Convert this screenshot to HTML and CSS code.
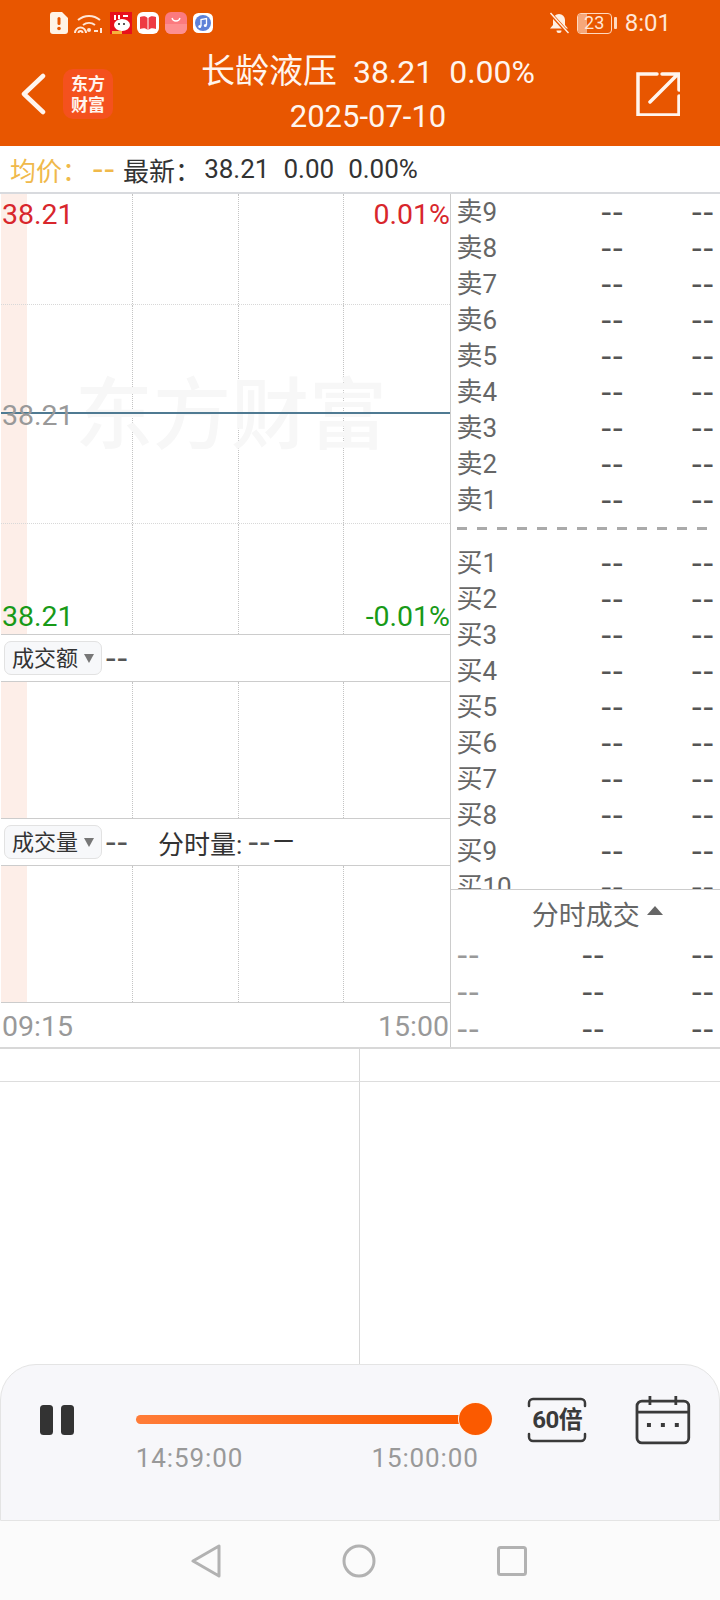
FILE: index.html
```html
<!DOCTYPE html>
<html>
    <head>
        <meta charset="utf-8">
        <title>长龄液压</title>
        <link rel="stylesheet" href="styles.css">
    </head>
    <body>
        <div class="page">
            <div class="top">
                <div class="status">
                    <div class="status-left">
                        <svg width="18" height="22" viewBox="0 0 18 22"><path d="M3 0h9l6 6v13a3 3 0 0 1-3 3H3a3 3 0 0 1-3-3V3a3 3 0 0 1 3-3z" fill="#fff3e6"/><rect x="7.500" y="5" width="3" height="8" rx="1.500" fill="#e85600"/><circle cx="9" cy="16.500" r="1.800" fill="#e85600"/></svg>
                        <svg width="30" height="22" viewBox="0 0 30 22" fill="none" stroke="#ffe6d6" stroke-width="2"><path d="M4 8a17 17 0 0 1 22 0"/><path d="M9 13a10 10 0 0 1 12 0"/><path d="M1 21a5.500 5.500 0 0 1 11 0"/><path d="M4.500 21a2 2 0 0 1 4 0"/><circle cx="15" cy="18" r="2" fill="#ffe6d6" stroke="none"/><path d="M20 19h4M27 16v5"/></svg>
                        <svg width="22" height="22" viewBox="0 0 22 22"><rect width="22" height="22" fill="#e8101c"/><ellipse cx="12" cy="13" rx="8" ry="6" fill="#fff"/><circle cx="9" cy="12" r="1" fill="#222"/><circle cx="14" cy="12" r="1" fill="#222"/><path d="M4 3h2v5H4zM8 3h2v4H8zM13 3h5v2h-5z" fill="#fff"/><rect x="2" y="19" width="10" height="3" fill="#f6b23c"/></svg>
                        <svg width="22" height="22" viewBox="0 0 22 22"><rect width="22" height="22" rx="6" fill="#fff"/><path d="M3 5c3-1 6-1 7.500 1v12C9 16 6 16 3 17zM19 5c-3-1-6-1-7.500 1v12c1.500-2 4.500-2 7.500-1z" fill="#ee3b43"/></svg>
                        <svg width="22" height="22" viewBox="0 0 22 22"><rect width="22" height="22" rx="6" fill="#fb7a7e"/><path d="M0 12h22v4a6 6 0 0 1-6 6H6a6 6 0 0 1-6-6z" fill="#fd8f90"/><path d="M7 6c1 4 7 4 8 0" fill="none" stroke="#fff" stroke-width="1.300"/></svg>
                        <svg width="20" height="20" viewBox="0 0 20 20"><rect width="20" height="20" rx="5.500" fill="#fff"/><circle cx="10" cy="10" r="8" fill="#5f82d8"/><path d="M8 13V6.500l5.500-1V12" fill="none" stroke="#fff" stroke-width="1.300"/><circle cx="6.800" cy="13.500" r="1.500" fill="#fff"/><circle cx="12.300" cy="12.500" r="1.500" fill="#fff"/></svg>
                    </div>
                    <div class="status-right">
                        <svg width="20" height="22" viewBox="0 0 20 22"><path d="M10 2a6 6 0 0 1 6 6v5l3 3.500H1L4 13V8a6 6 0 0 1 6-6z" fill="#fff0e4"/><path d="M7.500 18.500a2.500 2.500 0 0 0 5 0z" fill="#fff0e4"/><path d="M1 1l18 20" stroke="#e85600" stroke-width="3.500"/><path d="M1.500 1l18 20" stroke="#fff0e4" stroke-width="1.500"/></svg>
                        <div class="battery"><div class="battery-body"><span class="battery-fill"></span><span class="battery-num">23</span></div><span class="battery-cap"></span></div>
                        <span class="clock">8:01</span>
                    </div>
                </div>
                <div class="header">
                    <svg class="back" width="26" height="42" viewBox="0 0 26 42" fill="none" stroke="#fff5ee" stroke-width="4.500" stroke-linecap="round" stroke-linejoin="round"><path d="M23 3L4 21l19 18"/></svg>
                    <div class="logo">东方<br>财富</div>
                    <div class="title">
                        <div class="title-main"><span class="title-name">长龄液压</span>&nbsp; 38.21&nbsp; 0.00%</div>
                        <div class="title-date">2025-07-10</div>
                    </div>
                    <svg class="share" width="44" height="44" viewBox="0 0 44 44" fill="none" stroke="#fff5ee" stroke-width="3.500" stroke-linecap="round"><path d="M21 2H2v41h41V24"/><path d="M14 30L42 2M26 2h17v16"/></svg>
                </div>
            </div>

            <div class="quote">
                <span class="avg">均价：</span><span class="avg dash">--</span>
                <span class="quote-new">最新：</span><span class="quote-first">38.21</span><span class="quote-num">0.00</span><span class="quote-num">0.00%</span>
            </div>

            <div class="main">
                <div class="left">
                    <div class="pane pane-price">
                        <div class="grid-row row-a"><i></i><i></i><i></i><i></i></div>
                        <div class="grid-row row-b"><i></i><i></i><i></i><i></i></div>
                        <div class="grid-row row-c"><i></i><i></i><i></i><i></i></div>
                        <div class="grid-row row-d"><i></i><i></i><i></i><i></i></div>
                        <div class="watermark">东方财富</div>
                        <div class="mid-line"></div>
                        <span class="tag tag-high red">38.21</span>
                        <span class="tag tag-high tag-r red">0.01%</span>
                        <span class="tag tag-mid grey">38.21</span>
                        <span class="tag tag-low green">38.21</span>
                        <span class="tag tag-low tag-r green">-0.01%</span>
                    </div>
                    <div class="bar">
                        <div class="chip">成交额<span class="chip-arrow"></span></div>
                        <span class="dash">--</span>
                    </div>
                    <div class="pane pane-sub"><div class="grid-row row-full"><i></i><i></i><i></i><i></i></div></div>
                    <div class="bar">
                        <div class="chip">成交量<span class="chip-arrow"></span></div>
                        <span class="dash">--</span>
                        <span class="bar-extra">分时量:<span class="dash">--</span><span class="long-dash">—</span></span>
                    </div>
                    <div class="pane pane-sub"><div class="grid-row row-full"><i></i><i></i><i></i><i></i></div></div>
                    <div class="axis"><span>09:15</span><span>15:00</span></div>
                </div>

                <div class="right">
                    <div class="book">
                        <div class="row"><span class="row-name">卖9</span><span class="dash">--</span><span class="dash">--</span></div>
                        <div class="row"><span class="row-name">卖8</span><span class="dash">--</span><span class="dash">--</span></div>
                        <div class="row"><span class="row-name">卖7</span><span class="dash">--</span><span class="dash">--</span></div>
                        <div class="row"><span class="row-name">卖6</span><span class="dash">--</span><span class="dash">--</span></div>
                        <div class="row"><span class="row-name">卖5</span><span class="dash">--</span><span class="dash">--</span></div>
                        <div class="row"><span class="row-name">卖4</span><span class="dash">--</span><span class="dash">--</span></div>
                        <div class="row"><span class="row-name">卖3</span><span class="dash">--</span><span class="dash">--</span></div>
                        <div class="row"><span class="row-name">卖2</span><span class="dash">--</span><span class="dash">--</span></div>
                        <div class="row"><span class="row-name">卖1</span><span class="dash">--</span><span class="dash">--</span></div>
                        <div class="book-sep"></div>
                        <div class="row"><span class="row-name">买1</span><span class="dash">--</span><span class="dash">--</span></div>
                        <div class="row"><span class="row-name">买2</span><span class="dash">--</span><span class="dash">--</span></div>
                        <div class="row"><span class="row-name">买3</span><span class="dash">--</span><span class="dash">--</span></div>
                        <div class="row"><span class="row-name">买4</span><span class="dash">--</span><span class="dash">--</span></div>
                        <div class="row"><span class="row-name">买5</span><span class="dash">--</span><span class="dash">--</span></div>
                        <div class="row"><span class="row-name">买6</span><span class="dash">--</span><span class="dash">--</span></div>
                        <div class="row"><span class="row-name">买7</span><span class="dash">--</span><span class="dash">--</span></div>
                        <div class="row"><span class="row-name">买8</span><span class="dash">--</span><span class="dash">--</span></div>
                        <div class="row"><span class="row-name">买9</span><span class="dash">--</span><span class="dash">--</span></div>
                        <div class="row"><span class="row-name">买10</span><span class="dash">--</span><span class="dash">--</span></div>
                    </div>
                    <div class="trades">
                        <div class="trades-title">分时成交<span class="trades-arrow"></span></div>
                        <div class="trade"><span class="dash light">--</span><span class="dash">--</span><span class="dash">--</span></div>
                        <div class="trade"><span class="dash light">--</span><span class="dash">--</span><span class="dash">--</span></div>
                        <div class="trade"><span class="dash light">--</span><span class="dash">--</span><span class="dash">--</span></div>
                    </div>
                </div>
            </div>

            <div class="lower">
                <div class="lower-head"><div class="lower-cell"></div><div class="lower-cell"></div></div>
                <div class="lower-body"><div class="lower-cell"></div><div class="lower-cell"></div></div>
            </div>

            <div class="player">
                <div class="pause"><span></span><span></span></div>
                <div class="timeline">
                    <div class="track"><div class="track-fill"></div><div class="knob"></div></div>
                    <div class="times"><span>14:59:00</span><span>15:00:00</span></div>
                </div>
                <div class="speed">
                    <svg class="speed-frame" width="60" height="46" viewBox="0 0 60 46" fill="none" stroke="#3a3a3a" stroke-width="2.500" stroke-linecap="round"><path d="M2 9V6a4 4 0 0 1 4-4h48a4 4 0 0 1 4 4v3M2 37v3a4 4 0 0 0 4 4h48a4 4 0 0 0 4-4v-3"/></svg>
                    <span class="speed-text">60倍</span>
                </div>
                <svg class="calendar" width="56" height="50" viewBox="0 0 56 50" fill="none" stroke="#3a3a3a" stroke-width="2.800"><rect x="2" y="6" width="52" height="42" rx="5"/><path d="M2 17h52M15 1v9M41 1v9"/><path d="M12 30h4M26 30h4M40 30h4" stroke-width="4"/></svg>
            </div>

            <div class="nav">
                <svg width="30" height="34" viewBox="0 0 30 34" fill="none" stroke="#b2b2b2" stroke-width="3" stroke-linejoin="round"><path d="M28 2v30L2 17z"/></svg>
                <svg width="34" height="34" viewBox="0 0 34 34" fill="none" stroke="#b2b2b2" stroke-width="3"><circle cx="17" cy="17" r="15"/></svg>
                <svg width="30" height="30" viewBox="0 0 30 30" fill="none" stroke="#b2b2b2" stroke-width="3" stroke-linejoin="round"><rect x="1.500" y="1.500" width="27" height="27" rx="2"/></svg>
            </div>
        </div>
    </body>
</html>
```

FILE: styles.css
```css
* {
    box-sizing: border-box;
}

body {
    margin: 0;
    background-color: #fff;
    font-family: Roboto, "Noto Sans CJK SC", sans-serif;
    color: #333;
}

.page {
    width: 720px;
    height: 1600px;
    display: flex;
    flex-direction: column;
    overflow: hidden;
}

/* top orange part */
.top {
    height: 146px;
    background-color: #e85600;
    color: #fff5ee;
}

.status {
    height: 46px;
    padding: 0 49px 0 50px;
    display: flex;
    justify-content: space-between;
    align-items: center;
}

.status-left {
    display: flex;
    align-items: center;
    gap: 5.8px;
}

.status-right {
    display: flex;
    align-items: center;
    gap: 8px;
}

.battery {
    display: flex;
    align-items: center;
    gap: 2px;
}

.battery-body {
    position: relative;
    width: 35px;
    height: 21px;
    border: 1.5px solid #ffd9bf;
    border-radius: 4px;
    overflow: hidden;
}

.battery-fill {
    position: absolute;
    left: 0;
    top: 0;
    bottom: 0;
    width: 9px;
    background-color: #f6a77a;
}

.battery-num {
    position: absolute;
    left: 0;
    right: 0;
    top: 0;
    text-align: center;
    font-size: 18px;
    line-height: 18px;
    color: #ffe6d6;
}

.battery-cap {
    width: 3px;
    height: 12px;
    border-radius: 1px;
    background-color: #ffd9bf;
}

.clock {
    font-size: 24px;
    color: #ffe6d6;
}

.header {
    height: 100px;
    padding-bottom: 4px;
    display: flex;
    align-items: center;
}

.back {
    margin-left: 20px;
}

.logo {
    width: 50px;
    height: 50px;
    margin-left: 17px;
    border-radius: 10px;
    background-color: #f4511e;
    font-size: 17px;
    line-height: 21px;
    font-weight: 700;
    text-align: center;
    padding-top: 5px;
}

.title {
    width: 510px;
    margin-top: -5px;
    text-align: center;
}

.title-main {
    font-size: 32px;
    line-height: 50px;
    white-space: nowrap;
}

.title-name {
    font-size: 34px;
}

.title-date {
    font-size: 31px;
    line-height: 40px;
}

.share {
    margin-left: 13px;
}

/* 均价 line */
.quote {
    height: 46px;
    padding-left: 10px;
    display: flex;
    align-items: center;
    font-size: 26px;
    white-space: nowrap;
    color: #333;
}

.avg {
    color: #f0b94b;
}

.avg.dash {
    margin-left: 4px;
    color: #f0b94b;
}

.quote-new {
    margin-left: 8px;
}

.quote-first {
    margin-left: 3px;
}

.quote-num {
    margin-left: 14px;
}

.dash {
    font-family: "DejaVu Sans", sans-serif;
    font-size: 32px;
    line-height: 32px;
    color: #555;
}

.dash.light {
    color: #999;
}

/* charts + order book */
.main {
    height: 857px;
    display: flex;
    border-top: 2px solid #d8dade;
    border-bottom: 2px solid #d8d8d8;
}

.left {
    width: 450px;
    padding-left: 1px;
    display: flex;
    flex-direction: column;
}

.pane {
    position: relative;
    background: linear-gradient(#fdeee8, #fdeee8) 0 0 / 26px 100% no-repeat;
}

.pane-price {
    height: 440px;
    overflow: hidden;
}

.pane-sub {
    height: 136px;
}

.grid-row {
    display: grid;
    grid-template-columns: 132px 106px 105px 1fr;
    border-bottom: 1px dotted #d8d8d8;
}

.grid-row i {
    border-right: 1px dotted #c4c4c4;
}

.grid-row i:last-child {
    border-right: 0;
}

.row-a {
    height: 111px;
}

.row-b {
    height: 109px;
}

.row-c {
    height: 110px;
}

.row-d {
    height: 110px;
    border-bottom: 0;
}

.row-full {
    height: 100%;
    border-bottom: 0;
}

.watermark {
    position: absolute;
    left: 74px;
    top: 181px;
    font-size: 78px;
    line-height: 84px;
    font-weight: 500;
    color: #f7f7f7;
    white-space: nowrap;
}

.mid-line {
    position: absolute;
    left: 0;
    right: 0;
    top: 218px;
    height: 2px;
    background-color: #4f7a92;
}

.tag {
    position: absolute;
    left: 1px;
    font-size: 28.5px;
    line-height: 32px;
}

.tag-r {
    left: auto;
    right: 0;
}

.tag-high {
    top: 5px;
}

.tag-mid {
    top: 206px;
}

.tag-low {
    top: 407px;
}

.red {
    color: #d8262c;
}

.green {
    color: #189a18;
}

.grey {
    color: #999;
}

.bar {
    height: 48px;
    border-top: 1.5px solid #ccc;
    border-bottom: 1.5px solid #ccc;
    display: flex;
    align-items: center;
    gap: 3px;
    padding-left: 3px;
}

.chip {
    width: 98px;
    height: 34px;
    padding-left: 7px;
    border: 1px solid #e2e2e2;
    border-radius: 7px;
    background-color: #f7f8fa;
    font-size: 22px;
    line-height: 31px;
    display: flex;
    align-items: center;
    gap: 6px;
}

.chip-arrow {
    width: 0;
    height: 0;
    border-left: 5.5px solid transparent;
    border-right: 5.5px solid transparent;
    border-top: 9px solid #777;
}

.bar-extra {
    margin-left: 27px;
    font-size: 26px;
    display: flex;
    align-items: center;
}

.bar-extra .dash {
    margin-left: 5px;
}

.long-dash {
    margin-left: 2px;
    font-size: 28px;
    line-height: 32px;
}

.axis {
    flex: 1;
    padding: 2px 1px 0;
    border-top: 1.5px solid #ccc;
    display: flex;
    justify-content: space-between;
    align-items: center;
    font-size: 28.5px;
    color: #999;
}

.right {
    width: 270px;
    border-left: 1.5px solid #ccc;
    display: flex;
    flex-direction: column;
}

.book {
    height: 701px;
    overflow: hidden;
    padding: 0 6px 0 5.5px;
    border-bottom: 1.5px solid #ccc;
}

.row {
    height: 35.95px;
    display: grid;
    grid-template-columns: 144px 1fr 30px;
    align-items: center;
    font-size: 26px;
    line-height: 36px;
    color: #666;
}

.row .dash:last-child,
.trade .dash:last-child {
    text-align: right;
}

.row-name {
    white-space: nowrap;
}

.book-sep {
    height: 3px;
    margin: 10px 0 15px;
    background: repeating-linear-gradient(to right, #aaa 0, #aaa 10px, transparent 10px, transparent 20px);
}

.trades {
    flex: 1;
    padding: 0 6px 0 5.5px;
}

.trades-title {
    height: 46px;
    padding-left: 24px;
    font-size: 27px;
    color: #666;
    display: flex;
    justify-content: center;
    align-items: center;
    gap: 7px;
}

.trades-arrow {
    width: 0;
    height: 0;
    margin-bottom: 6px;
    border-left: 8px solid transparent;
    border-right: 8px solid transparent;
    border-bottom: 9px solid #666;
}

.trade {
    height: 37px;
    display: grid;
    grid-template-columns: 125px 1fr 30px;
    align-items: center;
}

/* empty part under the charts */
.lower {
    flex: 1;
    display: flex;
    flex-direction: column;
}

.lower-head {
    height: 33px;
    display: flex;
    border-bottom: 1.5px solid #ddd;
}

.lower-body {
    flex: 1;
    display: flex;
}

.lower-cell {
    width: 361px;
}

.lower-cell:first-child {
    border-right: 1px solid #d8d8d8;
}

/* replay controls */
.player {
    height: 157px;
    padding: 0 28px 0 39px;
    display: flex;
    align-items: flex-start;
    background-color: #f7f7fa;
    border: 1px solid #e4e4e4;
    border-bottom: 1.5px solid #e4e4e4;
    border-radius: 36px 36px 0 0;
}

.pause {
    width: 34px;
    margin-top: 40px;
    display: flex;
    justify-content: space-between;
}

.pause span {
    width: 13px;
    height: 30px;
    border-radius: 3.5px;
    background-color: #333;
}

.timeline {
    width: 358px;
    margin-left: 62px;
    margin-top: 38px;
}

.track {
    position: relative;
    height: 32px;
    display: flex;
    align-items: center;
}

.track-fill {
    width: 323px;
    height: 9px;
    border-radius: 4.5px 0 0 4.5px;
    background: linear-gradient(to right, #ff7c38, #fb5a00);
}

.knob {
    position: absolute;
    right: 0;
    top: 0;
    width: 33px;
    height: 32px;
    border-radius: 50%;
    background-color: #fb5a00;
    box-shadow: 0 0 0 1px #fff3ea;
}

.times {
    width: 343px;
    margin-top: 7px;
    display: flex;
    justify-content: space-between;
    font-size: 26px;
    line-height: 32px;
    letter-spacing: 0.9px;
    color: #999;
}

.speed {
    position: relative;
    width: 60px;
    height: 46px;
    margin-left: 35px;
    margin-top: 32px;
}

.speed-frame {
    display: block;
}

.speed-text {
    position: absolute;
    left: 0;
    right: 0;
    top: 8px;
    text-align: center;
    font-size: 24px;
    line-height: 30px;
    font-weight: 700;
    letter-spacing: -0.5px;
    color: #3a3a3a;
}

.calendar {
    margin-left: 48px;
    margin-top: 30px;
}

.nav {
    height: 79px;
    background-color: #fbfbfb;
    display: flex;
    align-items: center;
    padding: 0 193px 0 191px;
    justify-content: space-between;
}
```
